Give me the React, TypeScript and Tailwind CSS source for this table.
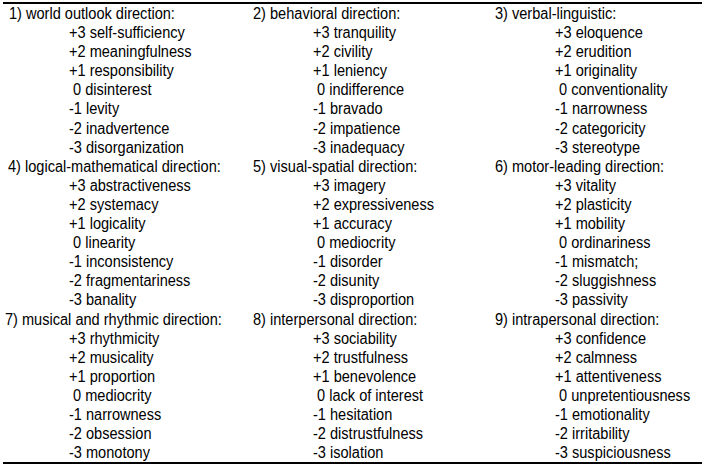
import React from 'react';

interface Cell {
  title: string;
  items: string[];
  shift?: string;
}

const cells: Cell[] = [
  {
    title: '1) world outlook direction:',
    items: ['+3 self-sufficiency', '+2 meaningfulness', '+1 responsibility', ' 0 disinterest', '-1 levity', '-2 inadvertence', '-3 disorganization'],
  },
  {
    title: '2) behavioral direction:',
    items: ['+3 tranquility', '+2 civility', '+1 leniency', ' 0 indifference', '-1 bravado', '-2 impatience', '-3 inadequacy'],
  },
  {
    title: '3) verbal-linguistic:',
    items: ['+3 eloquence', '+2 erudition', '+1 originality', ' 0 conventionality', '-1 narrowness', '-2 categoricity', '-3 stereotype'],
  },
  {
    title: '4) logical-mathematical direction:',
    items: ['+3 abstractiveness', '+2 systemacy', '+1 logicality', ' 0 linearity', '-1 inconsistency', '-2 fragmentariness', '-3 banality'],
    shift: '-ml-[1px]',
  },
  {
    title: '5) visual-spatial direction:',
    items: ['+3 imagery', '+2 expressiveness', '+1 accuracy', ' 0 mediocrity', '-1 disorder', '-2 disunity', '-3 disproportion'],
  },
  {
    title: '6) motor-leading direction:',
    items: ['+3 vitality', '+2 plasticity', '+1 mobility', ' 0 ordinariness', '-1 mismatch;', '-2 sluggishness', '-3 passivity'],
  },
  {
    title: '7) musical and rhythmic direction:',
    items: ['+3 rhythmicity', '+2 musicality', '+1 proportion', ' 0 mediocrity', '-1 narrowness', '-2 obsession', '-3 monotony'],
    shift: '-ml-[4px]',
  },
  {
    title: '8) interpersonal direction:',
    items: ['+3 sociability', '+2 trustfulness', '+1 benevolence', ' 0 lack of interest', '-1 hesitation', '-2 distrustfulness', '-3 isolation'],
  },
  {
    title: '9) intrapersonal direction:',
    items: ['+3 confidence', '+2 calmness', '+1 attentiveness', ' 0 unpretentiousness', '-1 emotionality', '-2 irritability', '-3 suspiciousness'],
  },
];

export default function App() {
  return (
    <div className="w-[708px] h-[466px] bg-white text-black overflow-hidden font-['Liberation_Sans_Narrow','Arial_Narrow','Liberation_Sans',sans-serif]">
      <div className="ml-[3px] mt-[2px] w-[699px] border-t-2 border-b-2 border-black">
        <div className="grid grid-cols-[244px_242px_1fr]">
          {cells.map((c) => (
            <div key={c.title} className="pl-[6px] text-[16px] leading-[19.1px] whitespace-pre">
              <div className={'origin-left scale-x-[0.91] ' + (c.shift ?? '')}>{c.title}</div>
              {c.items.map((it) => (
                <div key={it} className="pl-[60px]">
                  <div className="origin-left scale-x-[0.91]">{it}</div>
                </div>
              ))}
            </div>
          ))}
        </div>
      </div>
    </div>
  );
}
